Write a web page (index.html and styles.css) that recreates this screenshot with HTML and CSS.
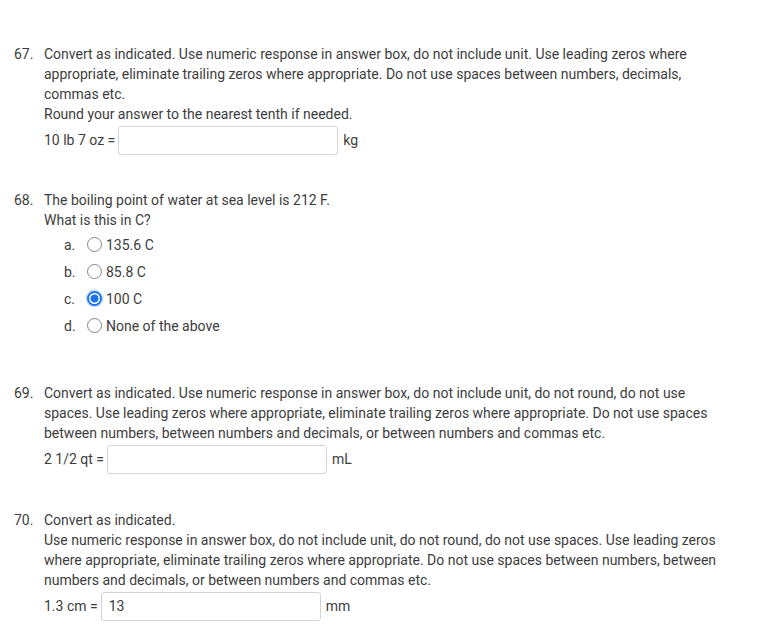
FILE: index.html
```html
<!DOCTYPE html>
<html>
<head>
<meta charset="utf-8">
<link rel="stylesheet" href="styles.css">
</head>
<body>
<div class="quiz">
  <div class="q q67">
    <div class="num">67.</div>
    <div class="body">
      <p class="text">Convert as indicated. Use numeric response in answer box, do not include unit. Use leading zeros where appropriate, eliminate trailing zeros where appropriate. Do not use spaces between numbers, decimals, commas etc.</p>
      <p class="text">Round your answer to the nearest tenth if needed.</p>
      <div class="answer"><span class="pre">10 lb 7 oz =</span><input class="box" type="text"><span class="unit">kg</span></div>
    </div>
  </div>

  <div class="q q68">
    <div class="num">68.</div>
    <div class="body">
      <p class="text">The boiling point of water at sea level is 212 F.</p>
      <p class="text">What is this in C?</p>
      <div class="options">
        <label class="opt"><span class="letter">a.</span><span class="radio"></span><span class="lbl">135.6 C</span></label>
        <label class="opt"><span class="letter">b.</span><span class="radio"></span><span class="lbl">85.8 C</span></label>
        <label class="opt"><span class="letter">c.</span><span class="radio checked"></span><span class="lbl">100 C</span></label>
        <label class="opt"><span class="letter">d.</span><span class="radio"></span><span class="lbl">None of the above</span></label>
      </div>
    </div>
  </div>

  <div class="q q69">
    <div class="num">69.</div>
    <div class="body">
      <p class="text">Convert as indicated. Use numeric response in answer box, do not include unit, do not round, do not use spaces. Use leading zeros where appropriate, eliminate trailing zeros where appropriate. Do not use spaces between numbers, between numbers and decimals, or between numbers and commas etc.</p>
      <div class="answer"><span class="pre">2 1/2 qt =</span><input class="box" type="text"><span class="unit">mL</span></div>
    </div>
  </div>

  <div class="q q70">
    <div class="num">70.</div>
    <div class="body">
      <p class="text">Convert as indicated.</p>
      <p class="text">Use numeric response in answer box, do not include unit, do not round, do not use spaces. Use leading zeros where appropriate, eliminate trailing zeros where appropriate. Do not use spaces between numbers, between numbers and decimals, or between numbers and commas etc.</p>
      <div class="answer"><span class="pre">1.3 cm =</span><input class="box" type="text" value="13"><span class="unit">mm</span></div>
    </div>
  </div>
</div>
</body>
</html>
```

FILE: styles.css
```css
html, body {
  margin: 0;
  padding: 0;
  background: #ffffff;
}
body {
  font-family: Roboto, "Liberation Sans", Arial, sans-serif;
  font-size: 14px;
  line-height: 20px;
  color: #3d3d3d;
}
.quiz {
  padding: 44px 40px 0 14px;
}
.q {
  display: flex;
}
.num {
  width: 30px;
  flex: none;
}
.body {
  flex: 1;
  min-width: 0;
}
.text {
  margin: 0;
}
.answer {
  display: flex;
  align-items: center;
  height: 30px;
  margin-top: 1px;
}
.pre {
  margin-right: 3px;
}
.box {
  box-sizing: border-box;
  width: 220px;
  height: 29px;
  border: 1px solid #d4d4d4;
  border-radius: 3px;
  padding: 0 7px;
  font-family: Roboto, "Liberation Sans", Arial, sans-serif;
  font-size: 14px;
  color: #3d3d3d;
  background: #fff;
  margin: 0;
  outline: none;
}
.unit {
  margin-left: 5px;
}
.q67 { margin-bottom: 35px; }
.q68 { margin-bottom: 44px; }
.q69 { margin-bottom: 36px; }
.options {
  padding-left: 20px;
  padding-top: 1px;
}
.opt {
  display: flex;
  align-items: center;
  height: 27px;
}
.letter {
  width: 23px;
}
.radio {
  box-sizing: border-box;
  width: 15px;
  height: 15px;
  border-radius: 50%;
  border: 1px solid #858585;
  margin-right: 4px;
  flex: none;
  background: #fff;
}
.radio.checked {
  border: 2px solid #1a73e8;
  background: radial-gradient(circle, #1a73e8 0 3.8px, #fff 4.3px);
  box-shadow: 0 0 0 1.5px #c9dcf8;
}
```
